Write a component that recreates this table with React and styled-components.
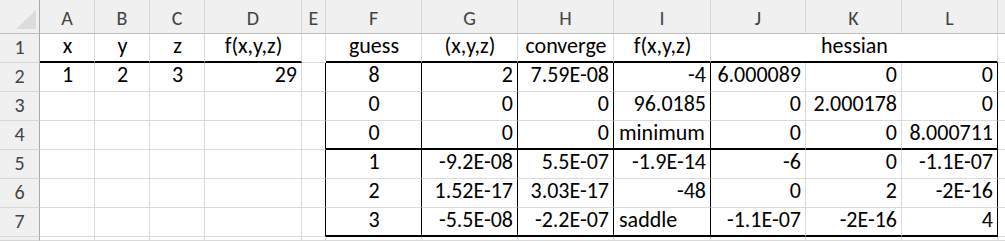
import React from "react";
import styled, { createGlobalStyle, css } from "styled-components";

const Global = createGlobalStyle`
  html, body { margin: 0; padding: 0; background: #ffffff; }
  body { overflow: hidden; }
`;

const COLS = ["A", "B", "C", "D", "E", "F", "G", "H", "I", "J", "K", "L", ""];
const WIDTHS = [55, 55, 55, 97, 24, 96, 96, 96, 97, 95, 96, 96];

const Sheet = styled.div`
  display: grid;
  grid-template-columns: 40px ${WIDTHS.map((w) => `${w}px`).join(" ")} 1fr;
  grid-template-rows: 34px repeat(7, 29px) minmax(0, 1fr);
  width: 1005px;
  height: 241px;
  overflow: hidden;
  font-family: Carlito, "Liberation Sans", Arial, sans-serif;
  color: #000;
  background: #fff;
`;

const Corner = styled.div`
  position: relative;
  background: #f0f0f0;
  border-right: 1px solid #a9a9a9;
  border-bottom: 1px solid #bdbdbd;
  box-sizing: border-box;
  &::after {
    content: "";
    position: absolute;
    right: 3px;
    bottom: 4px;
    width: 0;
    height: 0;
    border-left: 20px solid transparent;
    border-bottom: 19px solid #dcdcdc;
  }
`;

const ColHeader = styled.div`
  box-sizing: border-box;
  background: #f0f0f0;
  border-right: 1px solid ${(p) => (p.$last ? "transparent" : "#d6d6d6")};
  border-bottom: 1px solid #bdbdbd;
  display: flex;
  align-items: flex-end;
  justify-content: center;
  padding-bottom: 3px;
  font-size: 20px;
  color: #444;
  overflow: hidden;
`;

const RowHeader = styled.div`
  box-sizing: border-box;
  background: #f0f0f0;
  border-right: 1px solid #a9a9a9;
  border-bottom: 1px solid #d6d6d6;
  display: flex;
  align-items: flex-end;
  justify-content: center;
  padding-bottom: 3px;
  font-size: 20px;
  color: #444;
  overflow: hidden;
`;

const gridLine = "1px solid #dadada";

const Cell = styled.div`
  box-sizing: border-box;
  display: flex;
  align-items: flex-end;
  justify-content: ${(p) =>
    p.$align === "r" ? "flex-end" : p.$align === "l" ? "flex-start" : "center"};
  padding: 0 4px 3px 5px;
  font-size: 22px;
  white-space: nowrap;
  overflow: visible;
  grid-column: span ${(p) => p.$span || 1};
  border-right: ${(p) => (p.$br ? "1px solid #000" : gridLine)};
  border-bottom: ${(p) => (p.$bb ? "2px solid #000" : gridLine)};
  ${(p) =>
    p.$bb &&
    css`
      padding-bottom: 2px;
    `}
`;

const c = (t, a = "c", o = {}) => ({ t, a, ...o });
const e = (o = {}) => ({ t: "", a: "c", ...o });

const BOX = { br: true };
const BB = { bb: true };
const BOTH = { br: true, bb: true };

const rows = [
  [
    c("x", "c", BB), c("y", "c", BB), c("z", "c", BB), c("f(x,y,z)", "c", BB),
    e(),
    c("guess", "c", BB), c("(x,y,z)", "c", BB), c("converge", "c", BB), c("f(x,y,z)", "c", BB),
    c("hessian", "c", { bb: true, span: 3 }),
    e(),
  ],
  [
    c("1"), c("2"), c("3"), c("29", "r"), e(BOX),
    c("8", "c", BOX), c("2", "r", BOX), c("7.59E-08", "r", BOX), c("-4", "r", BOX),
    c("6.000089", "r"), c("0", "r"), c("0", "r", BOX), e(),
  ],
  [
    e(), e(), e(), e(), e(BOX),
    c("0", "c", BOX), c("0", "r", BOX), c("0", "r", BOX), c("96.0185", "r", BOX),
    c("0", "r"), c("2.000178", "r"), c("0", "r", BOX), e(),
  ],
  [
    e(), e(), e(), e(), e(BOX),
    c("0", "c", BOTH), c("0", "r", BOTH), c("0", "r", BOTH), c("minimum", "l", BOTH),
    c("0", "r", BB), c("0", "r", BB), c("8.000711", "r", BOTH),
    e(),
  ],
  [
    e(), e(), e(), e(), e(BOX),
    c("1", "c", BOX), c("-9.2E-08", "r", BOX), c("5.5E-07", "r", BOX), c("-1.9E-14", "r", BOX),
    c("-6", "r"), c("0", "r"), c("-1.1E-07", "r", BOX), e(),
  ],
  [
    e(), e(), e(), e(), e(BOX),
    c("2", "c", BOX), c("1.52E-17", "r", BOX), c("3.03E-17", "r", BOX), c("-48", "r", BOX),
    c("0", "r"), c("2", "r"), c("-2E-16", "r", BOX), e(),
  ],
  [
    e(), e(), e(), e(), e(BOX),
    c("3", "c", BOTH), c("-5.5E-08", "r", BOTH), c("-2.2E-07", "r", BOTH), c("saddle", "l", BOTH),
    c("-1.1E-07", "r", BB), c("-2E-16", "r", BB), c("4", "r", BOTH),
    e(),
  ],
];

export default function App() {
  return (
    <>
      <Global />
      <Sheet>
        <Corner />
        {COLS.map((col, i) => (
          <ColHeader key={i} $last={i === COLS.length - 1}>
            {col}
          </ColHeader>
        ))}
        {rows.map((row, ri) => (
          <React.Fragment key={ri}>
            <RowHeader>{ri + 1}</RowHeader>
            {row.map((cell, ci) => (
              <Cell key={ci} $align={cell.a} $br={cell.br} $bb={cell.bb} $span={cell.span}>
                {cell.t}
              </Cell>
            ))}
          </React.Fragment>
        ))}
        <RowHeader />
        {COLS.map((col, i) => (
          <Cell key={i} />
        ))}
      </Sheet>
    </>
  );
}
